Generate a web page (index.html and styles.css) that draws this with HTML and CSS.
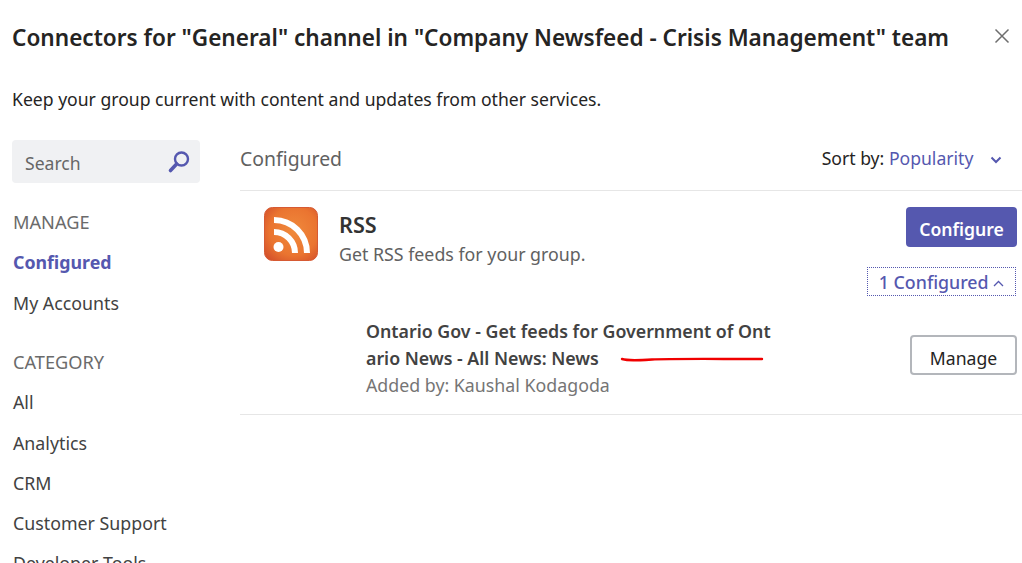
FILE: index.html
```html
<!DOCTYPE html>
<html lang="en">
<head>
  <meta charset="UTF-8">
  <title>Connectors</title>
  <link rel="stylesheet" href="styles.css">
</head>
<body>
  <header class="top">
    <h1>Connectors for "General" channel in "Company Newsfeed - Crisis Management" team</h1>
    <svg class="close" width="16" height="16" viewBox="0 0 16 16"><path d="M1.500 1.500l13 13M14.500 1.500l-13 13" stroke="#6e6e6e" stroke-width="1.5" fill="none"/></svg>
  </header>
  <p class="intro">Keep your group current with content and updates from other services.</p>

  <div class="layout">
    <!-- left column -->
    <aside class="side">
      <div class="search">
        <span>Search</span>
        <svg width="24" height="24" viewBox="0 0 24 24"><circle cx="14.5" cy="9" r="6.5" fill="none" stroke="#5558af" stroke-width="2.4"/><path d="M9.6 14L3.5 20.5" stroke="#5558af" stroke-width="3.6" stroke-linecap="round"/></svg>
      </div>
      <h2>MANAGE</h2>
      <a class="active">Configured</a>
      <a>My Accounts</a>
      <h2 class="second">CATEGORY</h2>
      <a>All</a>
      <a>Analytics</a>
      <a>CRM</a>
      <a>Customer Support</a>
      <a>Developer Tools</a>
    </aside>

    <!-- right column -->
    <main class="main">
      <div class="main-head">
        <span class="section-title">Configured</span>
        <div class="sort">
          Sort by: <span class="sort-value">Popularity</span>
          <svg width="12" height="8" viewBox="0 0 12 8"><path d="M1.5 1.5L6 6l4.500-4.500" stroke="#5558af" stroke-width="2" fill="none"/></svg>
        </div>
      </div>

      <section class="connector">
        <div class="connector-row">
          <svg class="rss" width="54" height="54" viewBox="0 0 54 54">
            <defs>
              <radialGradient id="rssBg" cx="0.55" cy="0.45" r="0.7">
                <stop offset="0" stop-color="#f08a3c"/>
                <stop offset="0.65" stop-color="#ea7430"/>
                <stop offset="1" stop-color="#d4512b"/>
              </radialGradient>
            </defs>
            <rect x="0.5" y="0.5" width="53" height="53" rx="8" fill="url(#rssBg)" stroke="#d65a33"/>
            <circle cx="14.500" cy="40" r="5" fill="#fff"/>
            <path d="M10 25a21 21 0 0 1 21 21" stroke="#fff" stroke-width="6" fill="none"/>
            <path d="M10 13a33 33 0 0 1 33 33" stroke="#fff" stroke-width="6" fill="none"/>
          </svg>
          <div class="connector-text">
            <h3>RSS</h3>
            <p>Get RSS feeds for your group.</p>
          </div>
          <button class="btn-primary">Configure</button>
        </div>
        <div class="toggle-row">
          <span class="toggle">1 Configured
            <svg width="11" height="7" viewBox="0 0 11 7"><path d="M1 6l4.500-4.500L10 6" stroke="#5558af" stroke-width="1.3" fill="none"/></svg>
          </span>
        </div>
        <div class="entry">
          <div class="entry-text">
            <div class="entry-name">Ontario Gov - Get feeds for Government of Ontario News - All News: News</div>
            <div class="entry-by">Added by: Kaushal Kodagoda</div>
          </div>
          <button class="btn-plain">Manage</button>
          <svg class="scribble" width="144" height="8" viewBox="0 0 144 8"><path d="M2 4c6 2 14 1.500 30 .5s60-.5 110-.5" stroke="#f00000" stroke-width="2.400" fill="none" stroke-linecap="round"/></svg>
        </div>
      </section>
    </main>
  </div>
</body>
</html>
```

FILE: styles.css
```css
html, body {
  margin: 0;
  height: 563px;
  overflow: hidden;
  background: #fff;
}
body {
  font-family: "Noto Sans", "Open Sans", sans-serif;
  font-size: 17.800px;
  color: #252423;
}
.top {
  display: flex;
  justify-content: space-between;
  padding: 20px 12px 0 12px;
  height: 37px;
}
h1 {
  margin: 0;
  font-size: 22.580px;
  line-height: 36px;
  font-weight: 600;
  white-space: nowrap;
}
.close {
  margin: 8px 0 0 0;
}
.intro {
  margin: 27px 0 0 12px;
  line-height: 30px;
  font-size: 17.600px;
}
.layout {
  display: flex;
  margin-top: 26px;
}
.side {
  width: 188px;
  margin-left: 12px;
  flex-shrink: 0;
}
.search {
  height: 43px;
  background: #f0f1f3;
  border-radius: 4px;
  display: flex;
  align-items: center;
  justify-content: space-between;
  padding: 0 9px 0 13px;
  color: #666;
  font-size: 17.600px;
}
.search span {
  padding-top: 2px;
}
.side h2 {
  margin: 19px 0 0 1px;
  font-size: 18.200px;
  font-weight: 400;
  line-height: 40px;
  color: #6b6b6b;
}
.side h2.second {
  margin-top: 19px;
}
.side a {
  display: block;
  margin-left: 1px;
  line-height: 40.300px;
  color: #424242;
}
.side a.active {
  color: #5558af;
  font-weight: 700;
  line-height: 41px;
}
.main {
  flex: 1;
  margin-left: 40px;
}
.main-head {
  display: flex;
  justify-content: space-between;
  align-items: center;
  height: 36px;
  padding-right: 20px;
  padding-bottom: 14px;
  border-bottom: 1px solid #e6e6e6;
  font-size: 17.600px;
}
.section-title {
  font-size: 19.400px;
  color: #616161;
}
.sort-value {
  color: #5558af;
  margin-right: 12px;
}
.sort svg {
  vertical-align: 1px;
}
.connector {
  border-bottom: 1px solid #e6e6e6;
  padding-bottom: 16px;
}
.connector-row {
  display: flex;
  padding: 16px 5px 0 24px;
}
.connector-text {
  flex: 1;
  margin-left: 21px;
}
h3 {
  margin: 1px 0 0 0;
  font-size: 21.600px;
  font-weight: 600;
  line-height: 34px;
  color: #333;
}
.connector-text p {
  margin: 0;
  line-height: 25px;
  color: #616161;
}
.btn-primary {
  width: 111px;
  height: 40px;
  padding-top: 5px;
  background: #5558af;
  color: #fff;
  border: 0;
  border-radius: 4px;
  font: 600 17.600px "Noto Sans", sans-serif;
}
.toggle-row {
  display: flex;
  justify-content: flex-end;
  padding: 0 6px 0 0;
}
.toggle {
  border: 1px dotted #5558af;
  width: 149px;
  box-sizing: border-box;
  height: 29px;
  line-height: 29px;
  text-align: center;
  color: #5558af;
  font-weight: 500;
  white-space: nowrap;
}
.toggle svg {
  vertical-align: 2px;
}
.entry {
  position: relative;
  display: flex;
  justify-content: space-between;
  align-items: flex-start;
  padding: 22px 5px 0 126px;
}
.entry-text {
  width: 410px;
}
.entry-name {
  font-weight: 600;
  line-height: 27px;
  word-break: break-all;
  color: #424242;
}
.entry-by {
  line-height: 26px;
  color: #757575;
}
.btn-plain {
  width: 107px;
  height: 40px;
  margin-top: 17px;
  padding-top: 7px;
  background: #fff;
  border: 2px solid #b3b6bb;
  border-radius: 4px;
  font: 400 17.600px "Noto Sans", sans-serif;
  color: #252423;
}
/* hand drawn red line on the screenshot */
.scribble {
  position: absolute;
  left: 380px;
  top: 59px;
}
```
